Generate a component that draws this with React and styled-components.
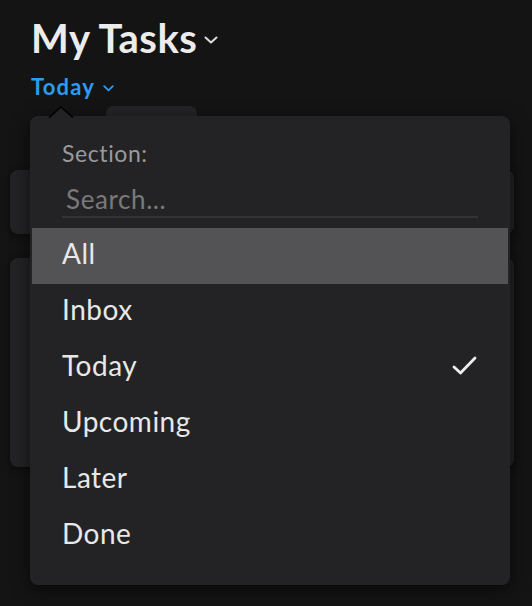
import React from 'react'
import styled, { createGlobalStyle } from 'styled-components'

const GlobalStyle = createGlobalStyle`
  html, body {
    margin: 0;
    padding: 0;
    background: #141414;
  }
  body {
    font-family: Lato, "Noto Sans", sans-serif;
    -webkit-font-smoothing: antialiased;
  }
`

const Page = styled.div`
  position: relative;
  width: 532px;
  height: 606px;
  overflow: hidden;
  padding: 14px 18px 0 10px;
  box-sizing: border-box;
`

const Header = styled.div`
  padding-left: 21px;
`

const TitleRow = styled.div`
  display: flex;
  align-items: center;
  gap: 7px;
  color: #ececec;
  font-size: 40px;
  font-weight: 700;
  line-height: 48px;
  letter-spacing: 0.5px;
`

const FilterRow = styled.div`
  display: flex;
  align-items: center;
  gap: 8px;
  margin-top: 12px;
  color: #2b9cf2;
  font-size: 22px;
  font-weight: 700;
  line-height: 26px;
  letter-spacing: 1.2px;
`

const Chevron = styled.svg`
  display: block;
  margin-top: ${(p) => p.$offset || 0}px;
`

const Content = styled.div`
  display: flex;
  flex-direction: column;
`

const Tab = styled.div`
  margin: 6px 0 0 96px;
  width: 91px;
  height: 40px;
  border-radius: 8px;
  background: #252527;
`

const Card = styled.div`
  height: ${(p) => p.$h}px;
  margin-top: ${(p) => p.$mt}px;
  border-radius: 8px;
  background: #232325;
  box-shadow: 0 2px 8px rgba(0, 0, 0, 0.5);
`

const Popover = styled.div`
  position: absolute;
  left: 30px;
  top: 116px;
  width: 480px;
  height: 469px;
  box-sizing: border-box;
  background: #232325;
  border-radius: 8px;
  box-shadow: 0 4px 18px rgba(0, 0, 0, 0.6);
  padding: 23px 0 21px;
`

const Arrow = styled.svg`
  position: absolute;
  left: 18px;
  top: -10px;
`

const SectionHead = styled.div`
  padding: 0 32px;
`

const Label = styled.div`
  color: #9a9a9c;
  font-size: 23px;
  line-height: 28px;
  letter-spacing: 0.6px;
`

const SearchInput = styled.input`
  display: block;
  width: 100%;
  box-sizing: border-box;
  height: 34px;
  margin-top: 17px;
  padding: 0 4px 3px;
  border: none;
  border-bottom: 2px solid #333335;
  background: transparent;
  outline: none;
  color: #e6e6e6;
  font-family: inherit;
  font-size: 26px;
  letter-spacing: 0.6px;
  &::placeholder {
    color: #79797b;
  }
`

const List = styled.div`
  display: flex;
  flex-direction: column;
  margin: 10px 2px 0;
`

const Item = styled.div`
  display: flex;
  align-items: center;
  justify-content: space-between;
  box-sizing: border-box;
  height: 56px;
  padding: 0 30px 6px;
  background: ${(p) => (p.$active ? '#535355' : 'transparent')};
  color: #e8e8e8;
  font-size: 28px;
  line-height: 34px;
  letter-spacing: 0.5px;
`

const Check = styled.svg`
  display: block;
  margin-top: 2px;
`

const sections = ['All', 'Inbox', 'Today', 'Upcoming', 'Later', 'Done']

export default function App() {
  return (
    <>
      <GlobalStyle />
      <Page>
        <Header>
          <TitleRow>
            My Tasks
            <Chevron width="14" height="8" viewBox="0 0 14 8" $offset={4}>
              <path d="M1.5 1.5 L7 6.5 L12.5 1.5" fill="none" stroke="#dcdcdc" strokeWidth="2" strokeLinecap="round" strokeLinejoin="round" />
            </Chevron>
          </TitleRow>
          <FilterRow>
            Today
            <Chevron width="11" height="7" viewBox="0 0 11 7" $offset={3}>
              <path d="M1.2 1.2 L5.5 5.3 L9.8 1.2" fill="none" stroke="#2b9cf2" strokeWidth="1.8" strokeLinecap="round" strokeLinejoin="round" />
            </Chevron>
          </FilterRow>
        </Header>
        <Content>
          <Tab />
          <Card $h={64} $mt={24} />
          <Card $h={209} $mt={24} />
        </Content>

        <Popover>
          <Arrow width="26" height="12" viewBox="0 0 26 12">
            <path d="M1 11.5 L13 1 L25 11.5" fill="#232325" stroke="#000" strokeWidth="1.6" strokeLinejoin="miter" />
          </Arrow>
          <SectionHead>
            <Label>Section:</Label>
            <SearchInput placeholder="Search..." />
          </SectionHead>
          <List>
            {sections.map((name) => (
              <Item key={name} $active={name === 'All'}>
                {name}
                {name === 'Today' && (
                  <Check width="26" height="20" viewBox="0 0 26 20">
                    <path d="M2 11 L8.5 17 L23 2" fill="none" stroke="#eeeeee" strokeWidth="2.8" strokeLinecap="round" strokeLinejoin="round" />
                  </Check>
                )}
              </Item>
            ))}
          </List>
        </Popover>
      </Page>
    </>
  )
}
